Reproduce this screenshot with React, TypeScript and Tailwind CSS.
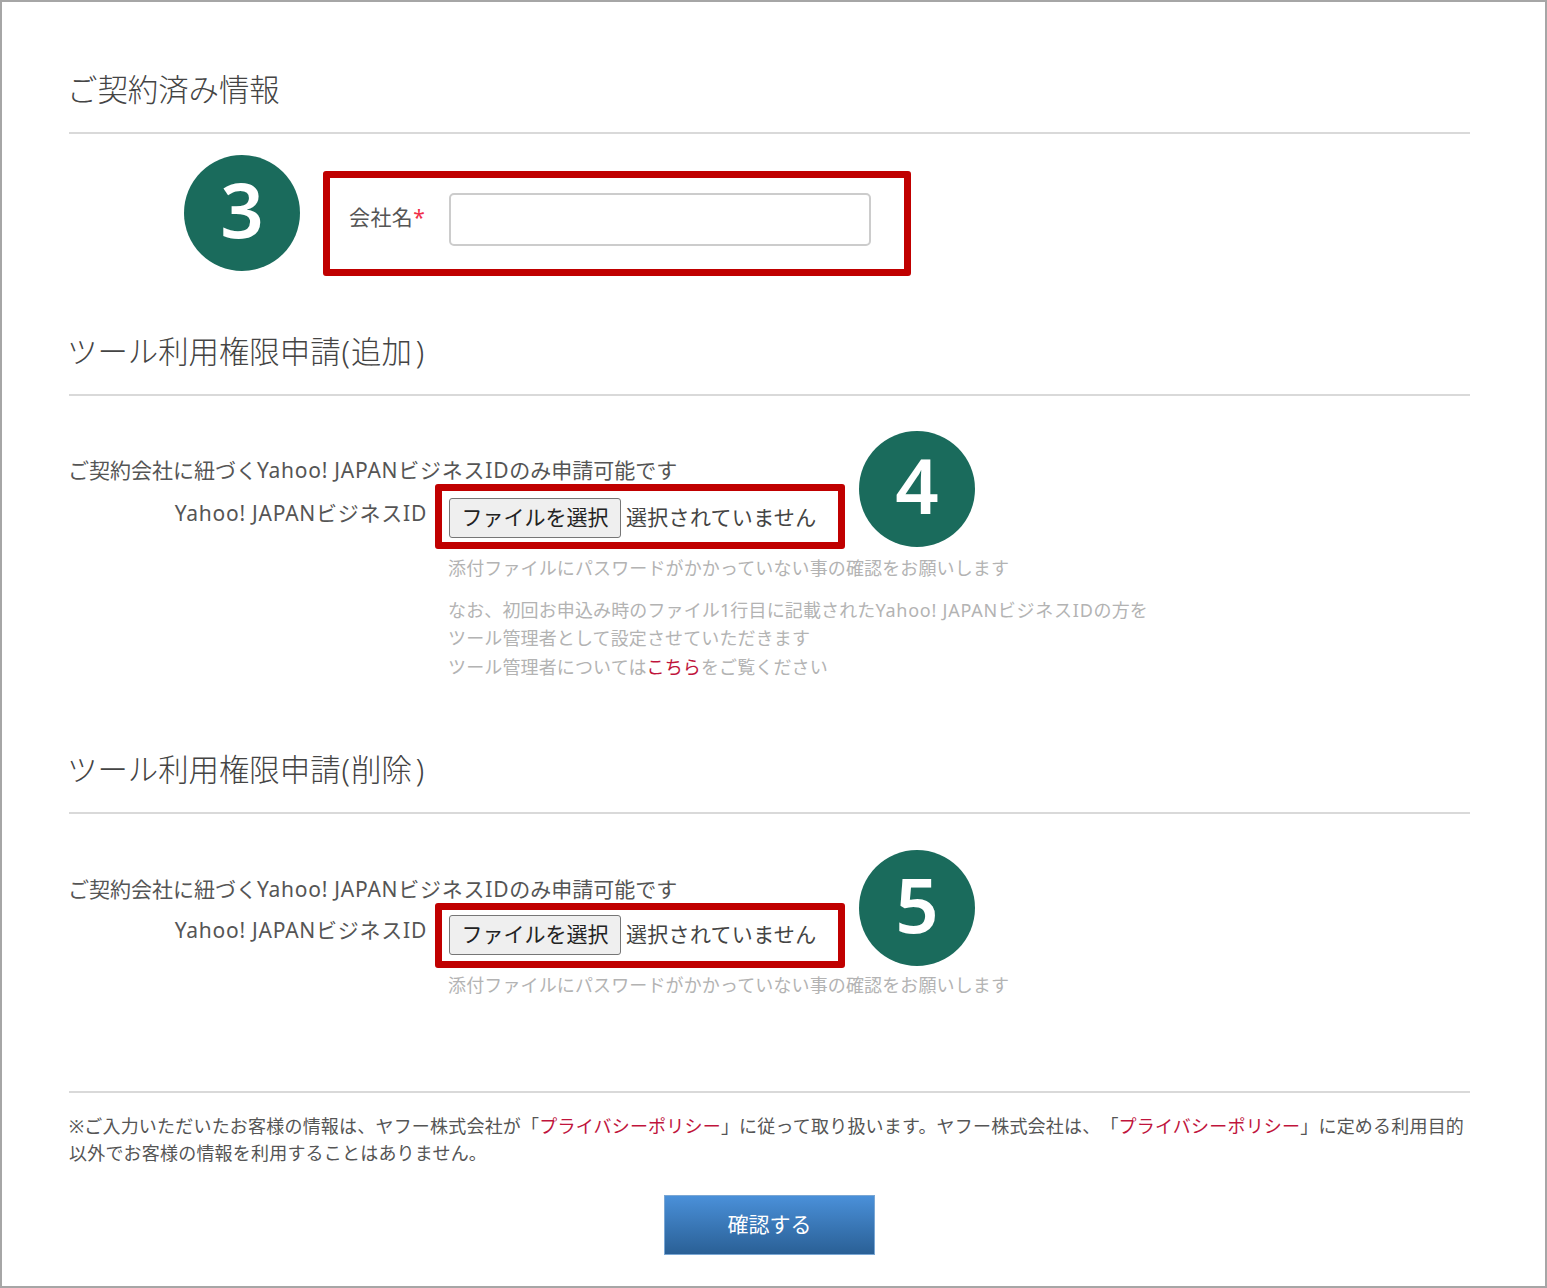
import type { ReactNode } from 'react';

const font = '[font-family:"Noto_Sans","Noto_Sans_CJK_JP",sans-serif]';
const hint = 'text-[18px] leading-[28.5px] tracking-[0.13px] text-[#b3b3b3]';

function SectionHeading({ children }: { children: ReactNode }) {
  return (
    <div className="h-[64px] border-b-2 border-[#d9d9d9]">
      <h2 className="-ml-[2px] text-[30.4px] font-light leading-[40px] text-[#444]">{children}</h2>
    </div>
  );
}

function StepBadge({ n, className }: { n: number; className: string }) {
  return (
    <div className={`absolute flex h-[116px] w-[116px] items-center justify-center rounded-full bg-[#1a6b5c] pb-[8px] text-[76px] font-semibold leading-none text-white ${className}`}>
      {n}
    </div>
  );
}

function BusinessId() {
  return <span className="tracking-[0.75px]">Yahoo! JAPANビジネスID</span>;
}

function Notice() {
  return (
    <p className="-ml-[1px] pt-[3px] text-[21px] leading-[27px] text-[#555]">
      ご契約会社に紐づく<BusinessId />のみ申請可能です
    </p>
  );
}

function FileRow({ labelPad, boxPad }: { labelPad: string; boxPad: string }) {
  return (
    <div className="flex items-start">
      <div className={`w-[358px] text-right text-[21px] leading-[30px] whitespace-nowrap text-[#555] ${labelPad}`}>
        <BusinessId />
      </div>
      <div className={`ml-[8px] flex h-[65px] w-[410px] items-center rounded-[3px] border-[7px] border-[#c00000] pl-[7px] ${boxPad}`}>
        <button className="h-[40px] w-[172px] rounded-[3px] border border-[#767676] bg-[#efefef] text-[21px] text-[#222]">ファイルを選択</button>
        <span className="ml-[5px] text-[21px] tracking-[0.3px] whitespace-nowrap text-[#444]">選択されていません</span>
      </div>
    </div>
  );
}

export default function App() {
  return (
    <div className={`h-[1288px] w-[1547px] border-2 border-[#a6a6a6] bg-white ${font}`}>
      <div className="relative pl-[67px] pr-[75px] pt-[68px]">
        <SectionHeading>ご契約済み情報</SectionHeading>

        <section className="relative h-[198px]">
          <StepBadge n={3} className="left-[115px] top-[21px]" />
          <div className="absolute left-[254px] top-[37px] flex h-[105px] w-[588px] items-center rounded-[3px] border-[7px] border-[#c00000] pb-[9px] pl-[19px]">
            <span className="mb-[3px] w-[77px] text-[21px] tracking-[0.4px] whitespace-nowrap text-[#555]">会社名<span className="text-[#f0304a]">*</span></span>
            <input className="ml-[23px] h-[53px] w-[422px] rounded-[5px] border-2 border-[#ccc]" />
          </div>
        </section>

        <SectionHeading>ツール利用権限申請<span className="mx-[1px]">(</span>追加<span className="ml-[4px]">)</span></SectionHeading>

        <section className="relative h-[354px] pt-[58px]">
          <StepBadge n={4} className="left-[790px] top-[35px]" />
          <Notice />
          <FileRow labelPad="pt-[14px]" boxPad="pt-[3px]" />
          <div className="pl-[379px]">
            <p className={`mt-[5px] ${hint}`}>添付ファイルにパスワードがかかっていない事の確認をお願いします</p>
            <p className={`mt-[13px] ${hint}`}>なお、初回お申込み時のファイル1行目に記載された<span className="tracking-[0.75px]">Yahoo! JAPANビジネスID</span>の方を</p>
            <p className={hint}>ツール管理者として設定させていただきます</p>
            <p className={hint}>ツール管理者については<span className="text-[#c0143c]">こちら</span>をご覧ください</p>
          </div>
        </section>

        <SectionHeading>ツール利用権限申請<span className="mx-[1px]">(</span>削除<span className="ml-[4px]">)</span></SectionHeading>

        <section className="relative h-[277px] pt-[59px]">
          <StepBadge n={5} className="left-[790px] top-[36px]" />
          <Notice />
          <FileRow labelPad="pt-[12px]" boxPad="pb-[1px]" />
          <div className="pl-[379px]">
            <p className={`mt-[3px] ${hint}`}>添付ファイルにパスワードがかかっていない事の確認をお願いします</p>
          </div>
        </section>

        <footer className="border-t-2 border-[#d9d9d9] pt-[20px]">
          <p className="text-[18px] leading-[27px] tracking-[0.2px] text-[#555] [text-spacing-trim:space-all]">
            ※ご入力いただいたお客様の情報は、ヤフー株式会社が「<span className="text-[#c0143c]">プライバシーポリシー</span>」に従って取り扱います。ヤフー株式会社は、「<span className="text-[#c0143c]">プライバシーポリシー</span>」に定める利用目的以外でお客様の情報を利用することはありません。
          </p>
          <div className="mt-[28px] flex justify-center">
            <button className="h-[60px] w-[211px] border border-[#7aa7d4] bg-gradient-to-b from-[#4a90d9] to-[#2a6096] text-[21px] text-white">確認する</button>
          </div>
        </footer>
      </div>
    </div>
  );
}
